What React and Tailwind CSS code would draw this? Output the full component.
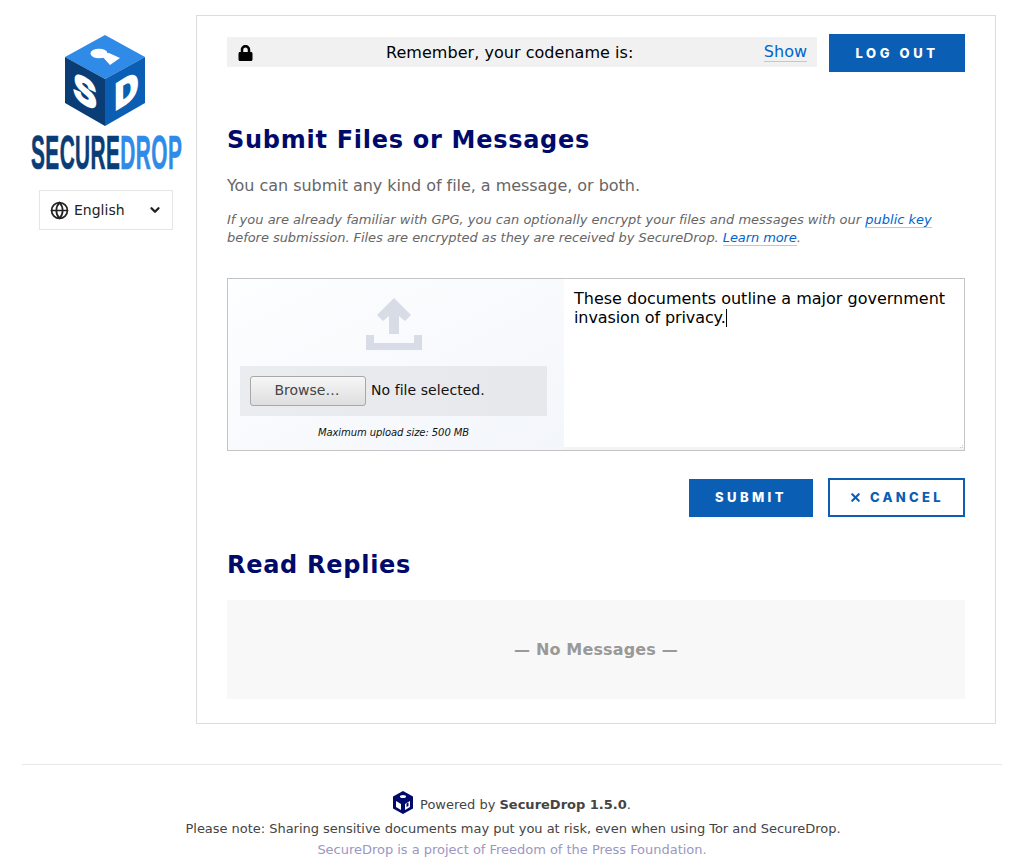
import { Globe, ChevronDown, X } from 'lucide-react';
import { FaLock } from 'react-icons/fa';

const sans = 'font-["DejaVu_Sans",sans-serif]';

function CubeLogo() {
  return (
    <svg width="80" height="91" viewBox="0 0 80 91" className="block">
      <polygon points="40,0 80,22 40,44 0,22" fill="#2f8ae8" />
      <polygon points="0,22 40,44 40,91 0,68" fill="#0a3c75" />
      <polygon points="80,22 40,44 40,91 80,68" fill="#0a5eb4" />
      <ellipse cx="34" cy="18.5" rx="8.5" ry="4.8" fill="#fff" />
      <polygon points="35,19 44,18 55,23 45,30" fill="#fff" />
      <text transform="matrix(0.92 0.55 0 1 9 62)" fontFamily="Liberation Sans" fontWeight="700" fontSize="36" fill="#fff" stroke="#fff" strokeWidth="3">S</text>
      <text transform="matrix(0.88 -0.55 0 1 50 75)" fontFamily="Liberation Sans" fontWeight="700" fontSize="36" fill="#fff" stroke="#fff" strokeWidth="3">D</text>
    </svg>
  );
}

function Sidebar() {
  return (
    <div className="w-[196px] shrink-0 flex flex-col items-center pt-[20px] pl-[14px]">
      <CubeLogo />
      <div className="mt-[8px] ml-[2px] w-[150px] h-[36px]">
        <div className='origin-top-left scale-x-[0.425] whitespace-nowrap font-["Liberation_Sans",sans-serif] font-bold text-[49px] leading-[36px] tracking-[1px] [-webkit-text-stroke:0.7px_currentColor]'>
          <span className="text-[#0a3c75]">SECURE</span>
          <span className="text-[#2f8ae8]">DROP</span>
        </div>
      </div>
      <div className="mt-[20px] ml-[2px] w-[134px] h-[40px] border border-[#e6e6e6] flex items-center pl-[10px] pr-[9px]">
        <Globe className="w-[19px] h-[19px] text-[#222]" strokeWidth={2.2} />
        <span className="ml-[5px] text-[14px] text-[#222]">English</span>
        <ChevronDown className="ml-auto mr-[1px] w-[14px] h-[14px] text-[#222]" strokeWidth={4} />
      </div>
    </div>
  );
}

function UploadBox() {
  return (
    <div className="mt-[31px] h-[173px] border border-[#c4c4c4] flex">
      <div className="w-[336px] shrink-0 pl-[12px] pr-[17px] flex flex-col items-center bg-gradient-to-br from-[#fdfeff] to-[#f3f6fb]">
        <svg width="56" height="54" viewBox="0 0 56 54" className="mt-[18px] block" fill="#d8dce6">
          <polygon points="28,1 45,18 39,24 33,19 33,37 23,37 23,19 17,24 11,18" />
          <polygon points="0,38 8,38 8,46 48,46 48,38 56,38 56,53 0,53" />
        </svg>
        <div className="mt-[15px] w-full h-[50px] bg-gradient-to-r from-[#eaecf0] to-[#e6e8ec] flex items-center pl-[10px]">
          <div className="w-[116px] h-[30px] pb-[2px] pr-[2px] rounded-[3px] border border-[#a8a8a8] bg-gradient-to-b from-[#f6f6f6] to-[#dedede] flex items-center justify-center text-[14px] text-[#444]">
            Browse…
          </div>
          <span className="ml-[5px] pb-[2px] text-[14px] tracking-[0.06px] text-[#111]">No file selected.</span>
        </div>
        <div className="mt-[9px] text-[10px] italic tracking-[-0.08px] text-[#111]">Maximum upload size: 500 MB</div>
      </div>
      <div className="flex-1 relative bg-white pl-[10px] pr-[10px] pt-[10px] border-b-[3px] border-[#f4f4f4] text-[16px] leading-[19px] text-black">
        These documents outline a major government <span className="tracking-[-0.1px]">invasion of privacy.</span>
        <span className="inline-block w-px h-[18px] bg-black align-text-bottom" />
        <svg width="3" height="3" viewBox="0 0 3 3" className="absolute right-[1px] bottom-[-1px]" fill="#c8c8c8">
          <rect x="2" y="0" width="1" height="1" />
          <rect x="0" y="2" width="1" height="1" />
          <rect x="2" y="2" width="1" height="1" />
        </svg>
      </div>
    </div>
  );
}

export default function App() {
  return (
    <div className={`${sans} w-[1024px] h-[868px] overflow-hidden bg-white`}>
      <div className="flex pt-[15px]">
        <Sidebar />
        <div className="w-[800px] h-[709px] border border-[#dcdcdc] px-[30px]">
          <div className="flex items-center mt-[18px]">
            <div className="w-[590px] h-[30px] mb-[2px] bg-[#f1f1f1] flex items-center pl-[11px] pr-[10px] text-[16px] text-black">
              <FaLock className="w-[15px] h-[16px] mt-[2px]" />
              <span className="ml-[133px] mt-[2px] tracking-[0.04px]">Remember, your codename is:</span>
              <span className="ml-auto text-[#0065cc] border-b border-[#b5c9e2] leading-[19px]">Show</span>
            </div>
            <button className='ml-[12px] w-[136px] h-[38px] pt-[2px] bg-[#0a5eb4] text-white text-[13px] font-extrabold tracking-[3.6px] font-["Inter",sans-serif]'>
              LOG OUT
            </button>
          </div>

          <h1 className="mt-[53px] text-[24px] leading-[30px] font-bold tracking-[0.72px] text-[#000a6b]">Submit Files or Messages</h1>
          <p className="mt-[21px] text-[16px] leading-[20px] tracking-[-0.04px] text-[#666]">You can submit any kind of file, a message, or both.</p>
          <p className="mt-[15px] text-[13px] leading-[18px] italic text-[#666]">
            <span className="tracking-[0.01px]">If you are already familiar with GPG, you can optionally encrypt your files and messages with our</span>{' '}
            <span className="text-[#0065cc] border-b border-[#b5c9e2]">public key</span>{' '}
            <span className="tracking-[-0.045px]">before submission. Files are encrypted as they are received by SecureDrop.</span>{' '}
            <span className="text-[#0065cc] border-b border-[#b5c9e2] tracking-[-0.1px]">Learn more</span>.
          </p>

          <UploadBox />

          <div className="mt-[27px] flex justify-end items-end">
            <button className='w-[124px] h-[38px] bg-[#0a5eb4] text-white text-[13px] font-extrabold tracking-[3.4px] font-["Inter",sans-serif]'>
              SUBMIT
            </button>
            <button className='ml-[15px] w-[137px] h-[39px] border-2 border-[#0a5eb4] text-[#0a5eb4] text-[13px] font-extrabold tracking-[3.3px] font-["Inter",sans-serif] flex items-center justify-center'>
              <X className="w-[13px] h-[13px] mr-[8px]" strokeWidth={4} />
              CANCEL
            </button>
          </div>

          <h2 className="mt-[33px] text-[24px] leading-[30px] font-bold tracking-[0.72px] text-[#000a6b]">Read Replies</h2>
          <div className="mt-[20px] h-[99px] bg-[#f8f8f8] flex items-center justify-center text-[16px] font-bold tracking-[0.15px] text-[#999]">
            — No Messages —
          </div>
        </div>
      </div>

      <div className="mx-[22px] mt-[40px] border-t border-[#e8e8e8] pt-[25px] flex flex-col items-center text-[13px] text-[#444]">
        <div className="flex items-center h-[24px]">
          <svg width="20" height="23" viewBox="0 0 20 23" className="block">
            <polygon points="10,0 20,5.5 20,17.5 10,23 0,17.5 0,5.5" fill="#000a6b" />
            <ellipse cx="10" cy="5.5" rx="3" ry="1.5" fill="#fff" />
            <polygon points="3,10 8,13 8,19 3,16" fill="#fff" />
            <polygon points="17,10 12,13 12,19 17,16" fill="#fff" />
            <polygon points="13.5,12.5 15.5,11.5 15.5,15 13.5,16" fill="#000a6b" />
          </svg>
          <span className="ml-[7px] mt-[6px]">Powered by <b>SecureDrop 1.5.0</b>.</span>
        </div>
        <p className="mt-[5px] ml-[2px] leading-[20px] tracking-[-0.03px]">Please note: Sharing sensitive documents may put you at risk, even when using Tor and SecureDrop.</p>
        <p className="mt-[1px] leading-[20px] tracking-[-0.02px] text-[#9b97c0]">SecureDrop is a project of Freedom of the Press Foundation.</p>
      </div>
    </div>
  );
}
